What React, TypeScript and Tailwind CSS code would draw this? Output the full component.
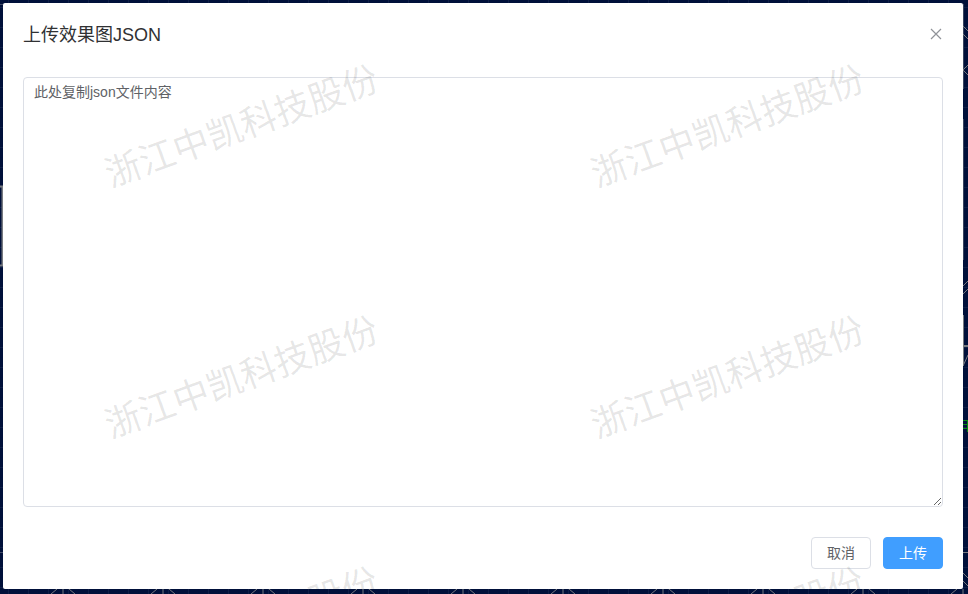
import { useId } from "react";

const WATERMARK = "浙江中凯科技股份";

/** Blueprint-like drawing that is visible around the dialog. */
function CanvasBackdrop() {
  const columns = [63, 163, 263, 363, 463, 563, 663, 763, 863, 963];
  return (
    <svg
      className="absolute inset-0 h-full w-full"
      viewBox="0 0 968 594"
      preserveAspectRatio="none"
      fill="none"
      aria-hidden="true"
    >
      <defs>
        <pattern id="grid" x="8" y="7" width="20" height="20" patternUnits="userSpaceOnUse">
          <path d="M0 .5H20M.5 0V20" stroke="#0f1f47" />
        </pattern>
      </defs>
      <rect width="968" height="594" fill="url(#grid)" />
      <g stroke="#777a80">
        {columns.map((x) => (
          <path key={x} d={`M${x - 6} 589l-6 5M${x} 589v5M${x + 6} 589l6 5`} />
        ))}
        <path d="M0 186.500H3M0 265.500H3M2.500 186V266" strokeWidth="2" />
        <path d="M0 552.500H3M0 4.500H3" stroke="#434d68" />
        <path d="M963.500 4V89M963.500 119V260" stroke="#39445f" />
        <path d="M963 26l5 5M963 34l5 5M968 65l-5 5l5 5" />
        <path d="M963 286l5-5M963 294l5-5M963.500 315V366M963 366l5-11" />
        <path d="M963 346H968" strokeWidth="2" />
        <path d="M963 552.500H968M963 573l5 5M963 581l5 5" />
      </g>
      <path d="M963 420.500H968M963 424.500H968M963 428.500H968M967.500 420V432" stroke="#078a12" />
    </svg>
  );
}

/** Slanted company name, repeated over the whole dialog. */
function Watermark() {
  return (
    <div
      className="pointer-events-none absolute inset-0 overflow-hidden text-4xl leading-none text-black/10"
      aria-hidden="true"
    >
      <div className="-mt-0.5 -ml-1 grid auto-rows-[251px] grid-cols-[486px_486px]">
        {Array.from({ length: 6 }, (_, index) => (
          <div key={index} className="flex items-center justify-center whitespace-nowrap">
            <span className="-rotate-20">{WATERMARK}</span>
          </div>
        ))}
      </div>
    </div>
  );
}

export default function App() {
  const titleId = useId();
  return (
    <div className="relative flex min-h-screen bg-[#00103a] pt-[3px] pr-[5px] pb-[5px] pl-[3px] font-['Liberation_Sans','Noto_Sans_CJK_SC',sans-serif]">
      <CanvasBackdrop />
      <section
        role="dialog"
        aria-labelledby={titleId}
        className="relative flex flex-1 flex-col rounded-xs bg-white p-5"
      >
        <header className="flex h-6 items-start justify-between">
          <h1 id={titleId} className="text-lg leading-6 text-[#303133]">
            上传效果图JSON
          </h1>
          <button type="button" aria-label="关闭" className="flex h-[22px] w-3.5 items-center justify-center text-[#909399]">
            <svg className="size-3" viewBox="0 0 12 12" fill="none" stroke="currentColor" aria-hidden="true">
              <path d="M1 1l10 10M11 1L1 11" strokeWidth="1.200" />
            </svg>
          </button>
        </header>
        <textarea
          aria-labelledby={titleId}
          defaultValue="此处复制json文件内容"
          spellCheck={false}
          className="mt-[30px] block w-full flex-1 resize-y rounded border border-[#dcdfe6] bg-white px-2.5 py-1 text-sm leading-5 text-[#606266] outline-none"
        />
        <footer className="mt-[30px] flex justify-end gap-3">
          <button
            type="button"
            className="h-8 rounded border border-[#dcdfe6] bg-white px-[15px] text-sm leading-5 text-[#606266]"
          >
            取消
          </button>
          <button
            type="button"
            className="h-8 rounded border border-[#409eff] bg-[#409eff] px-[15px] text-sm leading-5 text-white"
          >
            上传
          </button>
        </footer>
        <Watermark />
      </section>
    </div>
  );
}
